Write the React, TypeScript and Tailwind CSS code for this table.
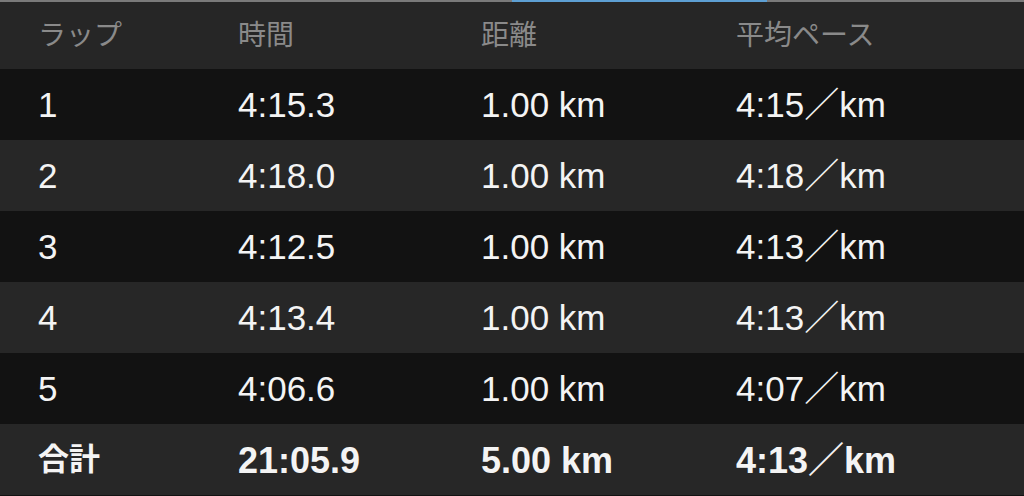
const laps = [
  { lap: '1', time: '4:15.3', dist: '1.00 km', pace: '4:15' },
  { lap: '2', time: '4:18.0', dist: '1.00 km', pace: '4:18' },
  { lap: '3', time: '4:12.5', dist: '1.00 km', pace: '4:13' },
  { lap: '4', time: '4:13.4', dist: '1.00 km', pace: '4:13' },
  { lap: '5', time: '4:06.6', dist: '1.00 km', pace: '4:07' },
]

const font = { fontFamily: '"Liberation Sans", "Noto Sans CJK JP", sans-serif' }

export default function App() {
  return (
    <div className="h-[496px] w-[1024px] overflow-hidden bg-[#121212]" style={font}>
      <div className="flex h-[2px] bg-[#7a7a7a]">
        <div className="ml-[512px] w-[255px] bg-[#5d9fd3]" />
      </div>
      <div className="grid h-[67px] grid-cols-[200px_243px_255px_1fr] items-center bg-[#262626] pl-[38px] text-[28px] text-[#8a8a8a]">
        <span>ラップ</span>
        <span>時間</span>
        <span>距離</span>
        <span>平均ペース</span>
      </div>
      <div className="text-[35px] text-[#f4f4f4]">
        {laps.map((l, i) => (
          <div
            key={l.lap}
            className={`grid h-[71px] grid-cols-[200px_243px_255px_1fr] items-center pl-[38px] pt-[2px] ${
              i % 2 === 0 ? 'bg-[#121212]' : 'bg-[#272727]'
            }`}
          >
            <span>{l.lap}</span>
            <span>{l.time}</span>
            <span>{l.dist}</span>
            <span>{l.pace}／km</span>
          </div>
        ))}
        <div className="grid h-[71px] grid-cols-[200px_243px_255px_1fr] items-center bg-[#272727] pl-[38px] pt-[2px] text-[36px] font-bold">
          <span className="text-[31px]">合計</span>
          <span>21:05.9</span>
          <span>5.00 km</span>
          <span>4:13／km</span>
        </div>
      </div>
    </div>
  )
}
